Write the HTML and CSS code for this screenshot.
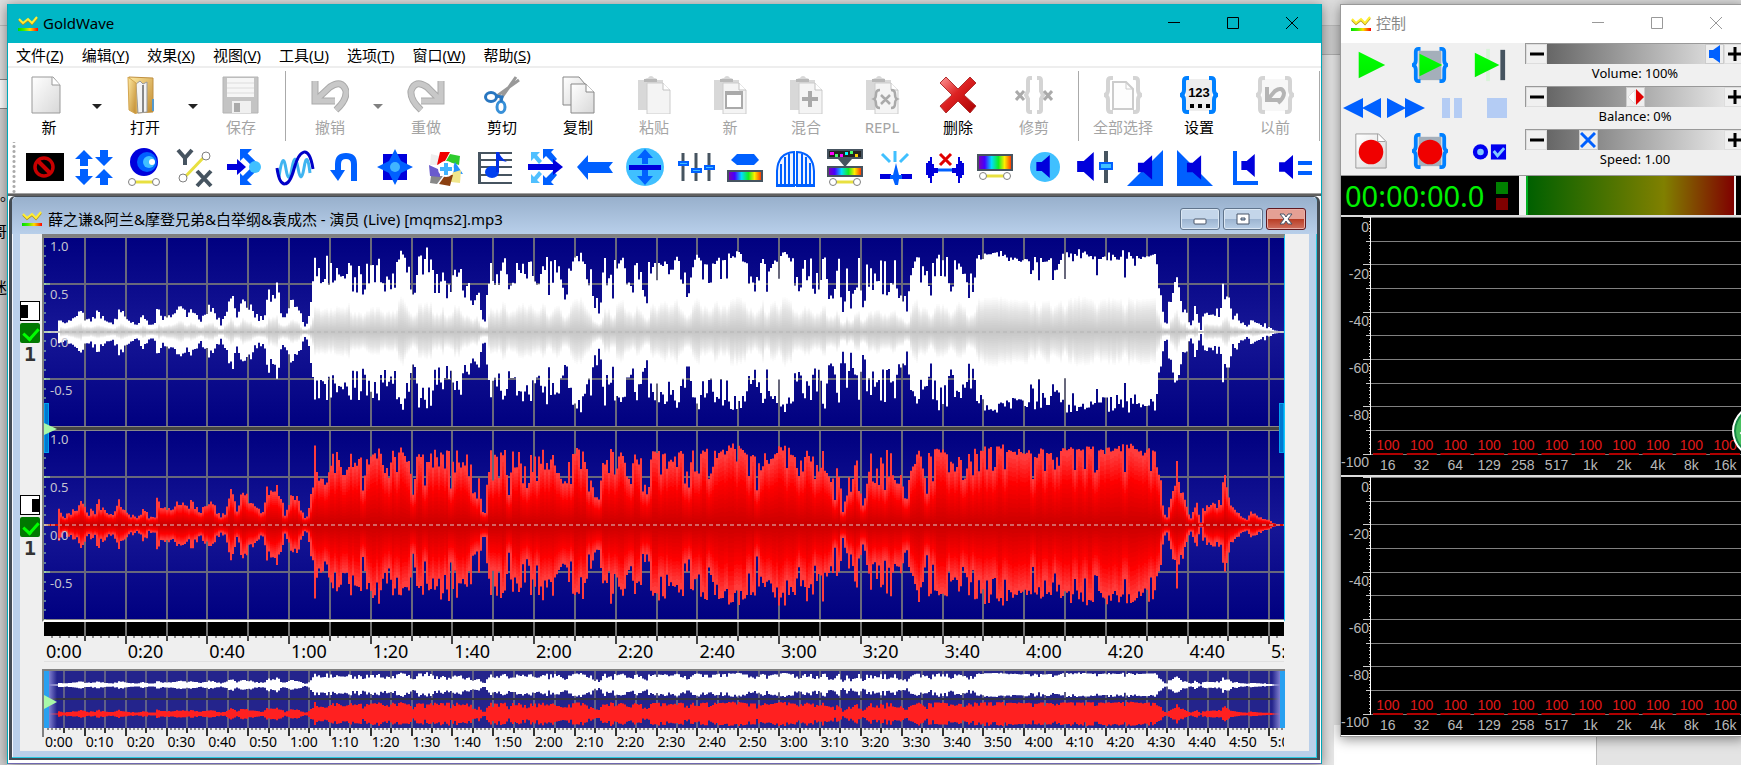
FILE: index.html
```html
<!DOCTYPE html>
<html lang="zh-CN">
<head>
<meta charset="utf-8">
<title>GoldWave</title>
<link rel="stylesheet" href="styles.css">
</head>
<body>
<svg class="defs" aria-hidden="true">
  <defs>
    <linearGradient id="rainbow"><stop offset="0" stop-color="#80a"/><stop offset=".2" stop-color="#40f"/><stop offset=".4" stop-color="#0df"/><stop offset=".6" stop-color="#1e2"/><stop offset=".78" stop-color="#fe0"/><stop offset="1" stop-color="#f20"/></linearGradient>
    <linearGradient id="logobar"><stop offset="0" stop-color="#0d0"/><stop offset=".3" stop-color="#4e0"/><stop offset=".6" stop-color="#fd0"/><stop offset="1" stop-color="#f00"/></linearGradient>
    <linearGradient id="paper" x2="1" y2="1"><stop offset="0" stop-color="#fff"/><stop offset="1" stop-color="#d8d8d8"/></linearGradient>
    <linearGradient id="gold" x2="1" y2="1"><stop offset="0" stop-color="#ffe9a0"/><stop offset="1" stop-color="#c08a30"/></linearGradient>
    <linearGradient id="redx" x2="1" y2="1"><stop offset="0" stop-color="#f99"/><stop offset=".45" stop-color="#d22"/><stop offset="1" stop-color="#a00"/></linearGradient>
    <linearGradient id="green" x2="0" y2="1"><stop offset="0" stop-color="#0f0"/><stop offset="1" stop-color="#0e0"/></linearGradient>
    <linearGradient id="field" x2="0" y2="1"><stop offset="0" stop-color="#000080"/><stop offset=".5" stop-color="#161696"/><stop offset="1" stop-color="#000080"/></linearGradient>
  </defs>
  <symbol id="logo" viewBox="0 0 20 15"><path d="M1 4l4 4 5-4 4 4 5-6" fill="none" stroke="#b09018" stroke-width="2"/><path d="M1 3l4 4 5-4 4 4 5-6" fill="none" stroke="#fe3" stroke-width="2"/><path d="M0 12h20v3H0z" fill="url(#logobar)"/></symbol>
  <symbol id="speaker" viewBox="0 0 18 28"><path d="M1 9h6l9-8v26l-9-8H1z" fill="#0000dc"/></symbol>
  <symbol id="clip" viewBox="0 0 38 38"><path d="M3 4h7q0-2 3-2 1-2 3-2t3 2q3 0 3 2h6v30H3z" fill="#d8d8d8"/><path d="M9 3h13v3H9z" fill="#b8b8b8"/><path d="M12 7h16l7 7v24H12z" fill="#f4f4f4" stroke="#ccc"/><path d="M28 7v7h7" fill="#fff" stroke="#c2c2c2"/></symbol>
  <symbol id="braces" viewBox="0 0 38 38"><path d="M9 2H7q-3 0-3 3v9q0 4-3 5 3 1 3 5v9q0 3 3 3h2M29 2h2q3 0 3 3v9q0 4 3 5-3 1-3 5v9q0 3-3 3h-2" fill="none" stroke="currentColor" stroke-width="4"/></symbol>
  <symbol id="nodes" viewBox="0 0 34 10"><path d="M8 5h18" stroke="#e8e040" stroke-width="3"/><circle cx="5" cy="5" r="3.500" fill="#fff" stroke="#808080"/><circle cx="29" cy="5" r="3.500" fill="#fff" stroke="#808080"/></symbol>
</svg>

<div class="desktop">
  <i class="behind behind-a"></i><i class="behind behind-b"></i>
  <span class="scrap scrap-a">。</span><span class="scrap scrap-b">哥</span><span class="scrap scrap-c">迷</span>

  <main class="window">
    <header class="titlebar">
      <svg class="logo"><use href="#logo"/></svg>
      <h1 class="title">GoldWave</h1>
      <div class="caption">
        <button aria-label="最小化"><svg viewBox="0 0 12 12"><path d="M0 5.500h12"/></svg></button>
        <button aria-label="最大化"><svg viewBox="0 0 12 12"><path d="M.5.5h11v11H.5z"/></svg></button>
        <button aria-label="关闭"><svg viewBox="0 0 12 12"><path d="M0 0l12 12M12 0L0 12"/></svg></button>
      </div>
    </header>
    <nav class="menu">
      <button>文件(<u>Z</u>)</button><button>编辑(<u>Y</u>)</button><button>效果(<u>X</u>)</button><button>视图(<u>V</u>)</button><button>工具(<u>U</u>)</button><button>选项(<u>T</u>)</button><button>窗口(<u>W</u>)</button><button>帮助(<u>S</u>)</button>
    </nav>

    <div class="toolbar">
      <button class="tool"><svg viewBox="0 0 38 38"><path d="M2 1h21l7 8v28H2z" fill="url(#paper)" stroke="#999"/><path d="M22 1v8h8" fill="#fff" stroke="#999"/></svg>新</button>
      <button class="drop" aria-label="新建选项"></button>
      <button class="tool"><svg viewBox="0 0 38 38"><path d="M3 1l24 1v34l-18 1z" fill="url(#gold)" stroke="#c09040"/><path d="M10 8l4-3 3 3 4-2v30l-9 1z" fill="#f4f4f4" stroke="#999"/><path d="M17 9v27" stroke="#888" stroke-width="2"/><path d="M2 1l8 6v31l-7-4z" fill="url(#gold)" stroke="#d4a650"/><path d="M27 23v12" stroke="#59c" stroke-width="2"/></svg>打开</button>
      <button class="drop" aria-label="打开选项"></button>
      <button class="tool" disabled><svg viewBox="0 0 38 38"><path d="M1 1h35v36H1z" fill="#c4c4c4" stroke="#b4b4b4"/><path d="M5 2h27v19H5z" fill="#f6f6f6"/><path d="M5 7h27M5 12h27M5 17h27" stroke="#dcdcdc"/><path d="M10 25h19v12H10z" fill="#f0f0f0"/><path d="M12 27h6v9h-6z" fill="#aaa"/></svg>保存</button>
      <i class="sep"></i>
      <button class="tool" disabled><svg viewBox="0 0 38 38"><path d="M4 5v20h20M5 24L19 11q12-8 16 4 1 9-10 19" fill="none" stroke="#aaa" stroke-width="7"/><path d="M4 5v20h20M5 24L19 11q12-8 16 4 1 9-10 19" fill="none" stroke="#c8c8c8" stroke-width="5"/></svg>撤销</button>
      <button class="drop faded" aria-label="撤销选项"></button>
      <button class="tool" disabled><svg viewBox="0 0 38 38"><path d="M34 5v20H14M33 24L20 11Q8 3 4 15q-1 9 10 19" fill="none" stroke="#aaa" stroke-width="7"/><path d="M34 5v20H14M33 24L20 11Q8 3 4 15q-1 9 10 19" fill="none" stroke="#c8c8c8" stroke-width="5"/></svg>重做</button>
      <button class="tool"><svg viewBox="0 0 38 38"><path d="M33 1L17 24M36 4L14 20" stroke="#999" stroke-width="3"/><ellipse cx="8" cy="21" rx="5.500" ry="4.500" fill="none" stroke="#2876c0" stroke-width="3"/><ellipse cx="18" cy="31" rx="4" ry="5.500" fill="none" stroke="#3890d8" stroke-width="3"/><path d="M13 20l6 1-1 5" fill="none" stroke="#2876c0" stroke-width="3"/></svg>剪切</button>
      <button class="tool"><svg viewBox="0 0 38 38"><path d="M4 1h16l6 7v21H4z" fill="url(#paper)" stroke="#888"/><path d="M12 8h15l8 8v21H12z" fill="url(#paper)" stroke="#888"/><path d="M27 8v8h8" fill="#fff" stroke="#888"/></svg>复制</button>
      <button class="tool" disabled><svg><use href="#clip"/></svg>粘贴</button>
      <button class="tool" disabled><svg viewBox="0 0 38 38"><use href="#clip"/><path d="M15 16h16v16H15z" fill="#fff" stroke="#aaa" stroke-width="2"/><path d="M14 15h18v4H14z" fill="#aaa"/></svg>新</button>
      <button class="tool" disabled><svg viewBox="0 0 38 38"><use href="#clip"/><path d="M23 15v16M15 23h16" stroke="#aaa" stroke-width="4"/></svg>混合</button>
      <button class="tool" disabled><svg viewBox="0 0 38 38"><use href="#clip"/><path d="M17 14q-4 0-4 4t-2 5q2 1 2 5t4 4M28 14q4 0 4 4t2 5q-2 1-2 5t-4 4M18 19l9 9M27 19l-9 9" fill="none" stroke="#aaa" stroke-width="2.500"/></svg>REPL</button>
      <button class="tool"><svg viewBox="0 0 38 38"><path d="M7 1l12 12L31 1l6 6-12 12 12 11-6 7-12-12L7 37l-6-7 12-11L1 7z" fill="url(#redx)" stroke="#b03030"/></svg>删除</button>
      <button class="tool" disabled><svg viewBox="0 0 38 38"><path d="M17 2h-2q-2 0-2 3v10l-2 4 2 4v11q0 2 2 2h2M22 2h2q2 0 2 3v10l2 4-2 4v11q0 2-2 2h-2" fill="none" stroke="#d4d4d4" stroke-width="4"/><path d="M1 15l8 9M9 15l-8 9M29 15l8 9M37 15l-8 9" stroke="#aaa" stroke-width="3"/></svg>修剪</button>
      <i class="sep"></i>
      <button class="tool" disabled><svg viewBox="0 0 38 38" class="pale"><use href="#braces"/><path d="M9 6h13l7 7v20H9z" fill="#fdfdfd" stroke="#ccc" stroke-width="2"/><path d="M22 6v7h7" fill="none" stroke="#ccc"/></svg>全部选择</button>
      <button class="tool"><svg viewBox="0 0 38 38" class="blue"><rect x="6" y="3" width="26" height="32" fill="#eee"/><use href="#braces"/><text x="19" y="21" class="digits">123</text><path d="M10 28h4v4h-4zM18 28h4v4h-4zM26 28h4v4h-4z" fill="#000"/></svg>设置</button>
      <button class="tool" disabled><svg viewBox="0 0 38 38" class="pale"><rect x="6" y="3" width="26" height="32" fill="#f7f7f7"/><use href="#braces"/><path d="M11 11v13h13M12 23l7-8q7-5 9 2 0 5-6 10" fill="none" stroke="#b4b4b4" stroke-width="4"/></svg>以前</button>
      <i class="sep"></i>
    </div>

    <div class="effects">
      <button aria-label="停止"><svg viewBox="0 0 38 38"><path d="M0 5h38v28H0z"/><circle cx="18" cy="19" r="9" fill="none" stroke="#c80000" stroke-width="3.500"/><path d="M12 13l12 12" stroke="#c80000" stroke-width="4"/></svg></button>
      <button aria-label="压缩"><svg viewBox="0 0 38 38" fill="#0060ff"><path d="M8 2l9 9h-5v7H4v-7h-5zM28 18l-9-9h5V2h8v7h5zM8 37l-9-9h5v-7h8v7h5zM28 21l9 9h-5v7h-8v-7h-5z"/></svg></button>
      <button aria-label="多普勒"><svg viewBox="0 0 38 38"><circle cx="18" cy="14" r="14" fill="#0000dc"/><circle cx="21" cy="14" r="10" fill="#0060ff"/><circle cx="23" cy="14" r="6" fill="#40c0ff"/><circle cx="26" cy="14" r="3" fill="#fff"/><use href="#nodes" x="1" y="29" width="34" height="10"/></svg></button>
      <button aria-label="动态"><svg viewBox="0 0 38 38"><path d="M2 2l7 8 7-8M9 9v8M21 23l14 15M35 23L21 38" fill="none" stroke="#465460" stroke-width="4"/><path d="M8 30L29 8" stroke="#e8e040" stroke-width="3"/><circle cx="7" cy="30" r="4" fill="#fff" stroke="#808080"/><circle cx="30" cy="8" r="4" fill="#fff" stroke="#808080"/></svg></button>
      <button aria-label="回声"><svg viewBox="0 0 38 38"><path d="M28 16L18 6M28 21L18 31" stroke="#0060ff" stroke-width="6"/><path d="M14 1h12L14 13zM14 37h12L14 25z" fill="#0060ff"/><path d="M1 16h10v-5l9 8-9 8v-5H1z" fill="#0000dc"/><circle cx="29" cy="19" r="6" fill="#40c0ff"/></svg></button>
      <button aria-label="滤波"><svg viewBox="0 0 38 38" fill="none"><path d="M3 29C6 8 8 9 10 21s4 11 6-1 4-12 6 0 4 12 6 0 4-12 6 5" stroke="#40b4f0" stroke-width="3"/><path d="M1 20c3 22 12 20 17 1S33-5 37 21" stroke="#0000c8" stroke-width="3"/></svg></button>
      <button aria-label="反转"><svg viewBox="0 0 38 38"><path d="M12 24V16q0-8 8-8t8 8v17" fill="none" stroke="#0060ff" stroke-width="6"/><path d="M4 22h15l-7 11z" fill="#0060ff"/></svg></button>
      <button aria-label="机械化"><svg viewBox="0 0 38 38"><path d="M7 6h24v26H7z" fill="#0000dc"/><path d="M19 1l6 12 12 6-12 6-6 12-6-12L1 19l12-6z" fill="#0060ff"/><circle cx="19" cy="19" r="5" fill="#40b4ff"/></svg></button>
      <button aria-label="插件"><svg viewBox="0 0 38 38"><path d="M5 6l8 2v9H4z" fill="#eee"/><path d="M14 4h10l-5 9-8 4z" fill="#f00000"/><path d="M24 6l10 2-1 9-13-4z" fill="#2ecc2e"/><path d="M29 14l8 12-12-1z" fill="#2090ff"/><path d="M25 25l10-3-1 13-9-1z" fill="#f0e68c"/><path d="M13 36l7-10 7 1-3 11z" fill="#8b4010"/><path d="M5 28h12l-6 8-7-1z" fill="#888"/><path d="M3 17l11 5v7L4 28z" fill="#6a5acd"/><circle cx="20" cy="21" r="8" fill="#fff"/><path d="M20 15v12M14 21h12" stroke="#40b4ff" stroke-width="4"/></svg></button>
      <button aria-label="音调"><svg viewBox="0 0 38 38"><path d="M4 5h32M4 12h32M4 19h32M4 27h32M4 35h32" stroke="#465460" stroke-width="2"/><path d="M2 4h3v32H2z" fill="#465460"/><ellipse cx="16" cy="24" rx="7" ry="6" fill="#0040f0"/><path d="M20 24V4h3q1 5 8 10l-8-2v12z" fill="#0030e8"/></svg></button>
      <button aria-label="混响"><svg viewBox="0 0 38 38"><path d="M5 4h9l-3 3 5 6-3 3-5-6-3 3zM5 35h9l-3-3 5-6-3-3-5 6-3-3z" fill="#50c0ff"/><path d="M17 1h11l-3 3 6 7-4 4-7-7-3 3zM17 37h11l-3-3 6-7-4-4-7 7-3-3z" fill="#0060ff"/><path d="M2 16h25v-5l10 8-10 8v-5H2z" fill="#0000dc"/></svg></button>
      <button aria-label="倒转"><svg viewBox="0 0 38 38"><path d="M1 19L12 7v7h25l-4 5 4 6H12v7z" fill="#0060ff"/></svg></button>
      <button aria-label="偏移"><svg viewBox="0 0 38 38"><circle cx="19" cy="19" r="19" fill="#40c0ff"/><path d="M19 1l8 9h-5v6h-6v-6h-5zM19 37l8-9h-5v-6h-6v6h-5z" fill="#0060ff"/><path d="M3 17h32v5H3z" fill="#0000dc"/></svg></button>
      <button aria-label="均衡器"><svg viewBox="0 0 38 38"><path d="M7 5v28M20 5v28M33 5v28" stroke="#465460" stroke-width="3"/><path d="M3 14h9v3H3zM16 21h9v3h-9zM29 18h9v3h-9z" fill="#40c0ff" stroke="#0060ff" stroke-width="2"/></svg></button>
      <button aria-label="频谱"><svg viewBox="0 0 38 38"><path d="M5 12l6-6h17l5 6-5 5H11z" fill="#0060ff"/><path d="M2 23h34v10H2z" fill="url(#rainbow)" stroke="#465460" stroke-width="2"/></svg></button>
      <button aria-label="噪声门"><svg viewBox="0 0 38 38" fill="#eef4ff" stroke="#0060ff" stroke-width="2"><path d="M1 38V23Q2 5 18 4v34zM21 38V4q16 1 17 19v15z" /><path d="M5 16v21M9 9v28M13 6v31M26 6v31M30 9v28M34 15v22M1 37h37"/></svg></button>
      <button aria-label="降噪"><svg viewBox="0 0 38 38"><path d="M2 2h34v8H2z" fill="#222" stroke="#465460" stroke-width="2"/><path d="M4 4h4v3H4zM14 6h3v3h-3z" fill="#f0f"/><path d="M9 6h3v3H9zM24 3h3v3h-3z" fill="#4f6"/><path d="M19 4h3v3h-3z" fill="#0ff"/><path d="M29 6h3v3h-3z" fill="#fc0"/><path d="M12 11h14l-7 8z" fill="#465460"/><path d="M2 19h34v9H2z" fill="url(#rainbow)" stroke="#465460" stroke-width="2"/><use href="#nodes" x="2" y="29" width="34" height="10"/></svg></button>
      <button aria-label="爆音"><svg viewBox="0 0 38 38"><path d="M6 6l8 8M19 3v11M32 6l-8 8" stroke="#40c0ff" stroke-width="3"/><path d="M4 26h11v5H4zM25 26h11v5H25z" fill="#0000dc"/><path d="M14 27h3l3-12 3 12h3v4h-3l-1 6h-3l-2-6h-3z" fill="#0060ff"/></svg></button>
      <button aria-label="静音"><svg viewBox="0 0 38 38"><path d="M12 22h14" stroke="#0060ff" stroke-width="3"/><path d="M0 15h2v-2h2v-4h2v7h2v4h4v5H8v3H6v7H4v-5H2v-3H0zM38 15h-2v-2h-2V9h-2v7h-2v4h-4v5h4v3h2v7h2v-5h2v-3h2z" fill="#0000dc"/><path d="M14 6l11 11M25 6L14 17" stroke="#e00000" stroke-width="3"/></svg></button>
      <button aria-label="频谱滤波"><svg viewBox="0 0 38 38"><path d="M2 7h34v15H2z" fill="url(#rainbow)" stroke="#465460" stroke-width="2"/><use href="#nodes" x="2" y="23" width="34" height="10"/></svg></button>
      <button aria-label="音量"><svg viewBox="0 0 38 38"><circle cx="19" cy="19" r="15" fill="#40c0ff"/><use href="#speaker" x="9" y="6" width="17" height="25"/></svg></button>
      <button aria-label="改变音量"><svg viewBox="0 0 38 38"><use href="#speaker" x="0" y="3" width="20" height="31"/><path d="M30 3v32" stroke="#465460" stroke-width="4"/><path d="M24 15h12v6H24z" fill="#40c0ff" stroke="#0060ff" stroke-width="2"/></svg></button>
      <button aria-label="淡入"><svg viewBox="0 0 38 38"><path d="M1 38L37 2v36z" fill="#0060ff"/><use href="#speaker" x="11" y="6" width="17" height="27"/></svg></button>
      <button aria-label="淡出"><svg viewBox="0 0 38 38"><path d="M37 38L1 2v36z" fill="#0060ff"/><use href="#speaker" x="10" y="6" width="17" height="27"/></svg></button>
      <button aria-label="匹配"><svg viewBox="0 0 38 38"><path d="M9 3v32h23" fill="none" stroke="#0060ff" stroke-width="4"/><use href="#speaker" x="14" y="5" width="17" height="25"/></svg></button>
      <button aria-label="最大化音量"><svg viewBox="0 0 38 38"><use href="#speaker" x="2" y="6" width="17" height="26"/><path d="M22 15h14M22 25h14" stroke="#0060ff" stroke-width="4"/></svg></button>
    </div>

    <div class="mdi">
      <section class="child">
        <header class="child-title">
          <svg class="logo"><use href="#logo"/></svg>
          <h2>薛之谦&amp;阿兰&amp;摩登兄弟&amp;白举纲&amp;袁成杰 - 演员 (Live) [mqms2].mp3</h2>
          <button aria-label="最小化"><svg viewBox="0 0 16 12"><rect x="2" y="6" width="12" height="5" rx="1"/></svg></button>
          <button aria-label="还原"><svg viewBox="0 0 16 12"><path d="M2 1h12v10H2zM6 5v2h4V5z" fill-rule="evenodd"/></svg></button>
          <button class="close" aria-label="关闭"><svg viewBox="0 0 16 12"><path d="M2 1h4l2 3 2-3h4l-4 5 4 5h-4L8 8l-2 3H2l4-5z"/></svg></button>
        </header>
        <div class="child-body">
          <div class="rail">
            <div class="rail-group"><i class="side left"></i><label class="check"><input type="checkbox" checked aria-label="左声道"></label><b>1</b></div>
            <div class="rail-group"><i class="side right"></i><label class="check"><input type="checkbox" checked aria-label="右声道"></label><b>1</b></div>
          </div>
          <div class="tracks">
            <div class="stage">
              <div class="channel"><svg class="wave" id="ch1" viewBox="0 0 1240 190" preserveAspectRatio="none"></svg><div class="levels"><span>1.0</span><span>0.5</span><span>0.0</span><span>-0.5</span></div></div>
              <div class="channel"><svg class="wave" id="ch2" viewBox="0 0 1240 190" preserveAspectRatio="none"></svg><div class="levels"><span>1.0</span><span>0.5</span><span>0.0</span><span>-0.5</span></div></div>
              <i class="grab start"></i><i class="grab end"></i><i class="marker"></i>
            </div>
            <svg class="strip" id="strip" viewBox="0 0 1240 22" preserveAspectRatio="none"></svg>
            <div class="ruler" id="ruler"></div>
            <div class="overview">
              <svg class="mini" id="mini" viewBox="0 0 1240 66" preserveAspectRatio="none"></svg>
              <i class="glow glow-l"></i><i class="glow glow-r"></i><i class="marker low"></i>
            </div>
            <div class="ruler small" id="ruler2"></div>
          </div>
        </div>
      </section>
    </div>
  </main>

  <aside class="window control">
    <header class="titlebar">
      <svg class="logo"><use href="#logo"/></svg>
      <h1 class="title">控制</h1>
      <div class="caption">
        <button aria-label="最小化"><svg viewBox="0 0 12 12"><path d="M0 5.500h12"/></svg></button>
        <button aria-label="最大化"><svg viewBox="0 0 12 12"><path d="M.5.5h11v11H.5z"/></svg></button>
        <button aria-label="关闭"><svg viewBox="0 0 12 12"><path d="M0 0l12 12M12 0L0 12"/></svg></button>
      </div>
    </header>
    <div class="panel">
      <div class="transport">
        <div class="trio">
          <button aria-label="播放"><svg viewBox="0 0 38 38"><path d="M6 5v28l28-14z" fill="url(#green)"/></svg></button>
          <button aria-label="播放选区"><svg viewBox="0 0 38 38" class="blue"><path d="M7 4h24v31H7z" fill="#a4afba"/><use href="#braces"/><path d="M8 7v24l24-12z" fill="url(#green)"/></svg></button>
          <button aria-label="播放到末尾"><svg viewBox="0 0 38 38"><path d="M16 2h4v34h-4z" fill="#d8f4d8"/><path d="M4 6v26l26-13z" fill="url(#green)"/><path d="M31 3h5v32h-5z" fill="#465460"/></svg></button>
        </div>
        <div class="quad">
          <button aria-label="快退"><svg viewBox="0 0 38 20" fill="#0060ff"><path d="M0 10L20 0v20zM19 10L38 0v20z"/></svg></button>
          <button aria-label="快进"><svg viewBox="0 0 38 20" fill="#0060ff"><path d="M38 10L18 0v20zM19 10L0 0v20z"/></svg></button>
          <button aria-label="暂停" disabled><svg viewBox="0 0 38 20" fill="#b4ccf4"><path d="M9 0h8v20H9zM21 0h8v20h-8z"/></svg></button>
          <button aria-label="停止" disabled><svg viewBox="0 0 38 20" fill="#b4ccf4"><path d="M9 0h20v20H9z"/></svg></button>
        </div>
        <div class="trio">
          <button aria-label="录音"><svg viewBox="0 0 38 38"><path d="M3 1h24l8 8v28H3z" fill="url(#paper)" stroke="#999"/><path d="M26 1v8h8" fill="#fff" stroke="#999"/><circle cx="19" cy="20" r="13" fill="#f00000"/></svg></button>
          <button aria-label="录入选区"><svg viewBox="0 0 38 38" class="blue"><path d="M7 4h24v31H7z" fill="#a4afba"/><use href="#braces"/><circle cx="19" cy="20" r="13" fill="#f00000"/></svg></button>
          <button aria-label="属性"><svg viewBox="0 0 38 38"><circle cx="10" cy="20" r="8" fill="#0000f0"/><circle cx="10" cy="20" r="3.500" fill="#80c8ff"/><path d="M21 12h16v16H21z" fill="#0000f0"/><path d="M24 19l4 5 7-8" fill="none" stroke="#80c8ff" stroke-width="3"/></svg></button>
        </div>
      </div>
      <div class="sliders">
        <div class="slider"><button aria-label="减小音量"><svg viewBox="0 0 14 14"><path d="M0 7h14"/></svg></button><input class="vol" id="vol" type="range" value="100"><button aria-label="增大音量"><svg viewBox="0 0 14 14"><path d="M0 7h14M7 0v14"/></svg></button></div>
        <label for="vol">Volume: 100%</label>
        <div class="slider"><button aria-label="向左平衡"><svg viewBox="0 0 14 14"><path d="M0 7h14"/></svg></button><input class="bal" id="bal" type="range" value="50"><button aria-label="向右平衡"><svg viewBox="0 0 14 14"><path d="M0 7h14M7 0v14"/></svg></button></div>
        <label for="bal">Balance: 0%</label>
        <div class="slider"><button aria-label="减速"><svg viewBox="0 0 14 14"><path d="M0 7h14"/></svg></button><input class="spd" id="spd" type="range" value="20"><button aria-label="加速"><svg viewBox="0 0 14 14"><path d="M0 7h14M7 0v14"/></svg></button></div>
        <label for="spd">Speed: 1.00</label>
      </div>
    </div>
    <div class="status">
      <div class="clock"><output>00:00:00.0</output><div class="lamps"><i></i><i></i></div></div>
      <div class="vu"></div>
      <div class="vu-end"></div>
    </div>
    <div class="graph"></div>
    <div class="graph"></div>
  </aside>
  <div class="bubble"><svg viewBox="0 0 60 60"><path d="M6 30l7-6v4h6v5h-6v4z" fill="#fff"/></svg></div>
</div>
<script src="app.js"></script>
</body>
</html>
```
FILE: styles.css
```css
* { box-sizing: border-box; }
html, body { height: 100%; }
body { margin: 0; overflow: hidden; background: #e6e6e6; color: #000; font: 15px/20px "Noto Sans", "Noto Sans CJK SC", sans-serif; }
button { padding: 0; border: 0; background: none; color: inherit; font: inherit; }
svg { display: block; }
h1, h2 { margin: 0; font: inherit; }
.defs { position: absolute; width: 0; height: 0; }
.blue { color: #0080ff; }
.pale { color: #d4d4d4; }
.digits { fill: #000; font: bold 13px "Liberation Sans", sans-serif; text-anchor: middle; }

.desktop {
  position: relative;
  display: grid;
  grid-template-columns: minmax(0, 1fr) 401px;
  gap: 18px;
  align-items: start;
  min-height: 100%;
  padding: 4px 0 0 7px;
  overflow: hidden;
  background: linear-gradient(#dedede 25px, #bdbdbd 25px, #bdbdbd 26px, #cecece 26px, #cecece 54px, #b0b0b0 54px, #b0b0b0 55px, #e7e7e7 55px);
}
.behind { position: absolute; }
.behind-a { left: 0; top: 26px; bottom: 0; width: 7px; background: linear-gradient(#ddd 53px, #888 53px, #888 54px, #fff 54px, #fff 82px, #888 82px, #888 83px, #d0d0d0 83px); }
.behind-b { right: 0; bottom: 0; width: 407px; height: 40px; background: linear-gradient(90deg, #fff 262px, #bbb 262px, #bbb 263px, #e4e4e4 263px); }
.scrap { position: absolute; left: -8px; }
.scrap-a { top: 184px; left: 0; }
.scrap-b { top: 221px; }
.scrap-c { top: 277px; }

.window { position: relative; min-width: 0; background: #fff; border: 1px solid #00a8b8; border-top-color: #00b4c4; box-shadow: 0 2px 12px #0007; }
main.window { border-bottom: 0; }
.titlebar { display: flex; align-items: center; height: 38px; padding: 0 0 2px 10px; background: #00b7c6; }
.logo { width: 20px; height: 15px; flex: none; }
.title { margin-left: 5px; flex: 1; }
.caption { display: flex; }
.caption button { width: 59px; height: 36px; display: grid; place-items: center; }
.caption svg { width: 12px; height: 12px; fill: none; stroke: currentColor; }
.menu { display: flex; height: 25px; border-bottom: 2px solid #eee; line-height: 22px; }
.menu button { padding: 0 10px 0 8px; white-space: nowrap; }

.toolbar { display: flex; height: 74px; padding: 8px 0 0 3px; overflow: hidden; }
.tool { flex: 0 0 76px; display: flex; flex-direction: column; align-items: center; gap: 2px; line-height: 22px; }
.tool svg { width: 38px; height: 38px; }
.tool:disabled { color: #a4a4a4; }
.drop { flex: 0 0 20px; height: 60px; display: grid; place-items: center; }
.drop::before { content: ""; border: 5px solid transparent; border-top-color: #222; border-bottom: 0; }
.faded::before { border-top-color: #808080; }
.sep { flex: 0 0 13px; height: 70px; margin-top: -5px; background: linear-gradient(#aaa, #aaa) center / 1px 100% no-repeat; }
.effects { display: flex; height: 51px; padding: 3px 0 4px 12px; background: radial-gradient(circle, #aaa 1px, transparent 2px) 4px 2px / 4px 5px repeat-y; overflow: hidden; }
.effects button { flex: 0 0 50px; display: grid; place-items: center; }
.effects svg { width: 38px; height: 38px; overflow: visible; }

.mdi { padding: 3px 1px 3px; background: linear-gradient(#a0a0a0 1px, #606060 1px, #606060 3px, #fff 3px); border-bottom: 1px solid #7068b0; }
.child { border: solid #444c54; border-width: 1px 3px 2px; border-radius: 6px 6px 0 0; padding: 0 8px 7px; background: #bad0ea; box-shadow: inset -1px -1px #28c8e0, inset 1px 1px #f4f8ff; }
.child-title { display: flex; align-items: center; gap: 3px; height: 37px; margin: 0 -8px; padding: 6px 11px 0 10px; background: linear-gradient(#98b0cc, #b8cfea); border-radius: 5px 5px 0 0; }
.child-title h2 { flex: 1; margin-left: 3px; white-space: nowrap; }
.child-title button { width: 40px; height: 22px; display: grid; place-items: center; border: 1px solid #60748c; border-radius: 3px; background: linear-gradient(#c4d6ea 48%, #9cb4d0 50%, #b8cee6); box-shadow: inset 0 0 0 1px #dce8f4; }
.child-title .close { border-color: #601820; background: linear-gradient(#e4a094 48%, #b83c24 50%, #d07060); box-shadow: inset 0 0 0 1px #e8b0a8; }
.child-title button svg { width: 16px; height: 12px; fill: #fff; stroke: #485468; }
.child-body { display: grid; grid-template-columns: 20px minmax(0, 1fr); gap: 2px; background: #efefef; padding: 0 24px 3px 0; }
.rail { padding-top: 3px; }
.rail-group { height: 190px; margin-bottom: 4px; display: flex; flex-direction: column; align-items: center; justify-content: center; gap: 2px; }
.rail-group b { font: bold 20px/18px "DejaVu Sans Mono", monospace; color: #333; }
.side { width: 20px; height: 20px; border: 1px solid #000; background: linear-gradient(#000, #000) 0 50% / 7px 13px no-repeat #fff; }
.side.right { background-position: 100% 50%; }
.check { height: 20px; }
.check input { appearance: none; display: block; width: 20px; height: 20px; margin: 0; border-radius: 2px; background: #007800; position: relative; }
.check input::after { content: ""; position: absolute; left: 6px; top: 2px; width: 7px; height: 12px; border: solid #0f0; border-width: 0 3px 3px 0; transform: rotate(42deg); }

.tracks { min-width: 0; }
.stage { position: relative; border: solid #808080; border-width: 3px 1px 0 2px; border-right-color: #18c8f8; background: #444; border-bottom: 2px solid #fff; }
.channel { position: relative; height: 190px; margin-bottom: 3px; }
.channel + .channel { margin-bottom: 0; }
.wave { width: 100%; height: 100%; }
.levels { position: absolute; inset: 0 auto 0 6px; color: #c4c4d0; font-size: 13px; }
.levels span { display: block; height: 48px; line-height: 19px; }
.grab { position: absolute; top: 166px; width: 5px; height: 50px; background: #0078d0; border: 1px solid #00a0f0; }
.grab.start { left: 0; }
.grab.end { right: 0; }
.marker { position: absolute; left: 0; top: 186px; width: 13px; height: 12px; background: #a8f8a8; clip-path: polygon(0 0, 100% 50%, 0 100%); }
.marker.low { top: 24px; height: 14px; }
.strip { width: calc(100% - 3px); height: 22px; margin-left: 2px; }
.ruler { display: flex; height: 18px; margin: 0 1px 0 2px; font-size: 18px; line-height: 14px; border-bottom: 1px solid #e0e0e0; }
.ruler span { flex: none; padding-left: 2px; }
.ruler span:last-child { flex: 1 1 0; min-width: 0; overflow-x: clip; }
.overview { position: relative; margin-top: 7px; height: 68px; border: solid #808080; border-width: 2px 0 0 2px; }
.mini { width: calc(100% - 1px); height: 66px; }
.ruler.small { height: 11px; font-size: 14px; line-height: 9px; border: 0; }
.ruler.small span { padding-left: 1px; }
.glow { position: absolute; top: 0; width: 13px; height: 57px; }
.glow-l { left: 0; background: linear-gradient(90deg, #28a0f0 5px, #8080d0 5px, #8080d000); }
.glow-r { right: 0; background: linear-gradient(270deg, #28a0f0 5px, #8080d0 5px, #8080d000); }

.control { background: #f0f0f0; border: 1px solid #999; border-right: 0; width: 405px; }
.control .titlebar { background: #fff; color: #999; }
.control .title { color: #888; }
.panel { display: grid; grid-template-columns: 179px 1fr; column-gap: 5px; height: 132px; }
.transport { display: flex; flex-direction: column; }
.trio { display: grid; grid-template-columns: repeat(3, 59px); height: 43px; justify-items: center; align-items: center; }
.trio svg { width: 36px; height: 36px; }
.quad { display: grid; grid-template-columns: 42px 45px 48px 42px; height: 43px; align-items: center; }
.quad button { justify-self: center; }
.quad svg { width: 38px; height: 20px; }
.sliders { display: flex; flex-direction: column; text-align: center; }
.slider { display: grid; grid-template-columns: 21px minmax(0, 1fr) 21px; height: 21px; border-top: 1px solid #999; border-left: 1px solid #999; }
.slider button { display: grid; place-items: center; border: 1px solid #ddd; }
.slider button svg { width: 14px; height: 14px; stroke: #000; stroke-width: 3; }
.slider input { appearance: none; width: 100%; height: 20px; margin: 0; background: linear-gradient(90deg, #666, #e4e4e4); }
.slider input::-webkit-slider-thumb { appearance: none; width: 19px; height: 20px; background: #eee center no-repeat; border: 1px solid #ccc; }
.vol::-webkit-slider-thumb { background-image: url("data:image/svg+xml,%3Csvg xmlns='http://www.w3.org/2000/svg' width='14' height='18'%3E%3Cpath d='M1 5h4l7-5v18l-7-5H1z' fill='%230060ff'/%3E%3C/svg%3E") !important; }
.bal::-webkit-slider-thumb { background-image: url("data:image/svg+xml,%3Csvg xmlns='http://www.w3.org/2000/svg' width='17' height='16'%3E%3Cpath d='M8 1v14L1 8z' fill='%23fff' stroke='%23ddd'/%3E%3Cpath d='M9 0v16l8-8z' fill='%23e00000'/%3E%3C/svg%3E") !important; }
.spd::-webkit-slider-thumb { background-image: url("data:image/svg+xml,%3Csvg xmlns='http://www.w3.org/2000/svg' width='16' height='16'%3E%3Cpath d='M1 1l14 14M15 1L1 15' stroke='%230060ff' stroke-width='3'/%3E%3C/svg%3E") !important; }
.sliders label { height: 22px; line-height: 19px; font-size: 13px; }
.status { display: grid; grid-template-columns: 178px 208px 1fr; height: 40px; border-top: 1px solid #999; background: #f0f0f0; column-gap: 7px; }
.clock { display: flex; align-items: center; justify-content: space-between; padding: 0 11px 0 4px; background: #000; color: #00f000; font-size: 29px; line-height: 38px; }
.lamps i { display: block; width: 12px; height: 12px; margin: 4px 0; background: #008000; }
.lamps i + i { background: #800000; }
.vu { background: linear-gradient(90deg, #006000, #808000 66%, #800000); border-left: 2px solid #00b020; }
.vu-end { margin-left: -5px; background: #000; }
.graph { display: grid; grid-template-columns: 24px 6px minmax(0, 1fr); height: 260px; padding-right: 3px; background: #000; border-top: 2px solid #ddd; color: #b8b8b8; font: 14px/20px "Liberation Sans", Arial, sans-serif; }
.graph:last-child { border-bottom: 1px solid #fff; height: 261px; }
.graph .scale { display: grid; grid-template-rows: repeat(5, 47px) 20px; justify-items: end; text-align: right; }
.graph .ticks { width: 8px; height: 238px; margin-left: -2px; }
.graph .field { width: 100%; height: 238px; }
.graph .plot { position: relative; min-width: 0; }
.graph .bands { display: flex; text-align: center; }
.graph .bands span { flex: 1; }
.graph .peaks { position: absolute; left: 0; right: 0; top: 218px; color: #e01818; }
.bubble { position: absolute; right: -51px; top: 403px; width: 60px; height: 56px; border-radius: 50%; border: 2px solid #fff; background: #48c060; box-shadow: inset 0 0 0 2px #188848; }
```
FILE: app.js
```js
// Loudness envelope of the clip: x position (0-1240) and height in pixels.
const ENVELOPE = [
  13,0, 14,16, 18,9, 26,12, 36,24, 41,15, 46,11, 54,24, 61,11, 68,10, 74,24, 81,14, 93,6, 98,18, 104,7, 110,8, 111,29, 116,17,
  126,16, 134,26, 141,20, 146,24, 156,12, 161,20, 168,24, 176,8, 181,18, 187,40, 192,16, 199,38, 204,24, 218,12, 221,30,
  226,40, 234,38, 240,14, 246,32, 254,26, 259,8, 263,8, 265,30, 269,42, 270,77, 273,56, 281,44, 287,58, 293,64, 301,60,
  306,50, 313,70, 318,38, 323,66, 330,72, 341,52, 346,60, 356,80, 361,70, 368,40, 374,74, 381,62, 386,72, 392,48, 396,72,
  401,56, 406,40, 415,68, 424,46, 429,26, 434,52, 437,14, 440,14, 443,60, 449,48, 456,60, 460,72, 464,48, 469,54, 478,68,
  483,48, 486,70, 491,50, 499,72, 502,46, 507,74, 513,60, 522,38, 526,65, 532,75, 538,74, 544,50, 551,26, 554,26, 559,70,
  566,50, 572,64, 576,73, 583,46, 591,72, 598,48, 603,26, 606,66, 611,72, 626,66, 636,75, 644,52, 651,76, 660,70, 663,50,
  668,68, 676,72, 691,78, 696,76, 701,70, 708,66, 712,54, 718,74, 724,64, 731,70, 738,78, 748,72, 755,46, 761,75, 766,60,
  772,38, 778,76, 782,76, 786,34, 794,50, 798,20, 802,46, 806,32, 811,50, 818,22, 824,50, 829,44, 836,70, 839,34, 846,52,
  856,50, 861,24, 866,55, 874,78, 881,52, 886,38, 891,74, 901,75, 906,46, 914,70, 921,60, 926,38, 933,75, 956,78, 966,74,
  978,72, 988,66, 996,74, 1006,70, 1011,64, 1016,76, 1033,78, 1051,76, 1066,74, 1086,78, 1093,72, 1111,77, 1113,56,
  1116,36, 1119,12, 1122,8, 1126,34, 1133,58, 1136,30, 1141,24, 1144,10, 1147,5, 1150,28, 1156,2, 1159,22, 1163,18,
  1171,22, 1176,24, 1178,56, 1183,38, 1187,18, 1196,9, 1202,5, 1206,13, 1216,7, 1226,4, 1229,1, 1240,0
];
const SECONDS = 303.6;
const PX = 1240 / SECONDS;

function random(seed) {
  return () => {
    seed = (seed * 1664525 + 1013904223) >>> 0;
    return seed / 4294967296;
  };
}

function level(x) {
  for (let i = 2; i < ENVELOPE.length; i += 2) {
    if (x <= ENVELOPE[i]) {
      const x0 = ENVELOPE[i - 2], y0 = ENVELOPE[i - 1];
      return x < x0 ? 0 : y0 + (ENVELOPE[i + 1] - y0) * (x - x0) / (ENVELOPE[i] - x0);
    }
  }
  return 0;
}

function samples(seed) {
  const next = random(seed);
  const out = [];
  for (let x = 0; x < 1240; x += 2) {
    const base = level(x);
    const roll = next();
    let gain = base > 68 ? 0.94 + next() * 0.1 : 0.8 + next() * 0.26;
    if (roll > 0.93) gain *= base > 64 ? 1.04 : 1.35;
    if (roll < 0.12) gain *= 0.72;
    let up = Math.min(base * gain, 84);
    const peak = next(), height = 56 + next() * 20;
    if (x > 272 && x < 1110 && base > 36 && peak < 0.24) up = Math.max(up, height);
    const down = Math.min(up * (0.86 + next() * 0.18), 80);
    out.push([x, up, down]);
  }
  return out;
}

function shape(data, mid, scale) {
  let top = `M0 ${mid - 0.5}`;
  let bottom = "";
  for (const [x, up, down] of data) {
    const a = (mid - 0.5 - up * scale).toFixed(1);
    const b = (mid + 0.5 + down * scale).toFixed(1);
    top += `V${a}H${x + 2}`;
    bottom = `H${x + 2}V${b}H${x}` + bottom;
  }
  return `${top}${bottom}Z`;
}

function mix(a, b, t) {
  return `rgb(${a.map((v, i) => Math.round(v + (b[i] - v) * t)).join()})`;
}

function vertical(step, from, to, color, width = 2) {
  let d = "";
  for (let s = step; s < SECONDS; s += step) d += `M${Math.round(s * PX)} ${from}V${to}`;
  return `<path d="${d}" stroke="${color}" stroke-width="${width}"/>`;
}

function drawChannel(id, data, stops, limit) {
  let html = `<rect width="1240" height="190" fill="url(#field)"/>`;
  html += vertical(10, 0, 190, "#68687c");
  html += `<path d="M0 47h1240M0 142h1240" stroke="#68687c" stroke-width="2"/><path d="M0 .5h1240M0 189.5h1240" stroke="#888"/>`;
  html += `<path d="${shape(data, 95, 1)}" fill="${mix(stops[0], stops[0], 0)}"/>`;
  const smooth = data.map(([x, up, down], i) => {
    const near = data.slice(Math.max(0, i - 1), i + 2);
    const low = Math.min(...near.map(n => n[1]));
    return [x, Math.min(up, low * 1.15), Math.min(down, low * 1.05)];
  });
  for (let k = 0; k < 16; k++) {
    const t = k / 15;
    const color = t < 0.4 ? mix(stops[0], stops[1], t / 0.4) : mix(stops[1], stops[2], (t - 0.4) / 0.6);
    html += `<path d="${shape(smooth, 95, limit * (1 - t * 0.95))}" fill="${color}"/>`;
  }
  let ticks = "";
  for (let y = 9; y < 190; y += 9.5) ticks += `M0 ${y.toFixed(0)}h2`;
  html += `<path d="${ticks}M0 47h6M0 95h6M0 142h6" stroke="#b0f0b0"/>`;
  html += `<path d="M0 95h1240" stroke="${id === "ch1" ? "#b4b4b4" : "#e0c8c8"}" stroke-dasharray="4 3"/>`;
  document.getElementById(id).innerHTML = html;
}

const first = samples(7);
const second = samples(41);
drawChannel("ch1", first, [[255, 255, 255], [228, 228, 228], [200, 200, 200]], 0.46);
drawChannel("ch2", second, [[255, 60, 60], [255, 0, 0], [204, 0, 0]], 0.96);

document.getElementById("strip").innerHTML =
  `<rect width="1240" height="14"/>` + vertical(10, 0, 14, "#707070") +
  vertical(2, 14, 16, "#222", 1) + vertical(10, 14, 19, "#444") + vertical(20, 14, 22, "#444");

document.getElementById("mini").innerHTML =
  `<rect width="1240" height="57" fill="#24248c"/>` + vertical(5, 0, 57, "#606088") +
  `<path d="M0 28h1240" stroke="#333344" stroke-width="2"/>` +
  `<path d="${shape(first, 14, 0.145)}" fill="#fff"/><path d="${shape(second, 43, 0.145)}" fill="#ff2020"/>` +
  vertical(1, 57, 59, "#222", 1) + vertical(5, 57, 62, "#333") + vertical(10, 57, 65, "#333");

function fillRuler(id, step) {
  let html = "";
  for (let s = 0; s < SECONDS; s += step) {
    const label = `${Math.floor(s / 60)}:${String(s % 60).padStart(2, "0")}`;
    html += `<span style="width:${(100 * step / SECONDS).toFixed(4)}%">${label}</span>`;
  }
  document.getElementById(id).innerHTML = html;
}
fillRuler("ruler", 20);
fillRuler("ruler2", 10);

const bands = ["16", "32", "64", "129", "258", "517", "1k", "2k", "4k", "8k", "16k"];
for (const graph of document.querySelectorAll(".graph")) {
  let lines = "", ticks = "", bars = "";
  for (let i = 0; i <= 10; i++) {
    const y = Math.round(i * 23.65) + 0.5;
    lines += `M0 ${y}h370`;
    ticks += i % 2 ? `M3 ${y}h5` : `M0 ${y}h8`;
    for (let j = 1; j < 7 && i < 10; j++) ticks += `M6 ${Math.round(y + j * 3.4) + 0.5}h2`;
  }
  bands.forEach((_, i) => { bars += `M${i * 33.6 + 2} 237h30`; });
  graph.innerHTML =
    `<div class="scale">${["0", "-20", "-40", "-60", "-80", "-100"].map(v => `<span>${v}</span>`).join("")}</div>` +
    `<svg class="ticks" viewBox="0 0 8 238"><path d="${ticks}" stroke="#ccc"/><path d="M7.500 0v238" stroke="#fff"/></svg>` +
    `<div class="plot"><svg class="field" viewBox="0 0 370 238" preserveAspectRatio="none"><path d="${lines}" stroke="#808080"/><path d="${bars}" stroke="#b00000" stroke-width="2"/></svg>` +
    `<div class="bands peaks">${bands.map(() => "<span>100</span>").join("")}</div>` +
    `<div class="bands">${bands.map(b => `<span>${b}</span>`).join("")}</div></div>`;
}
```
